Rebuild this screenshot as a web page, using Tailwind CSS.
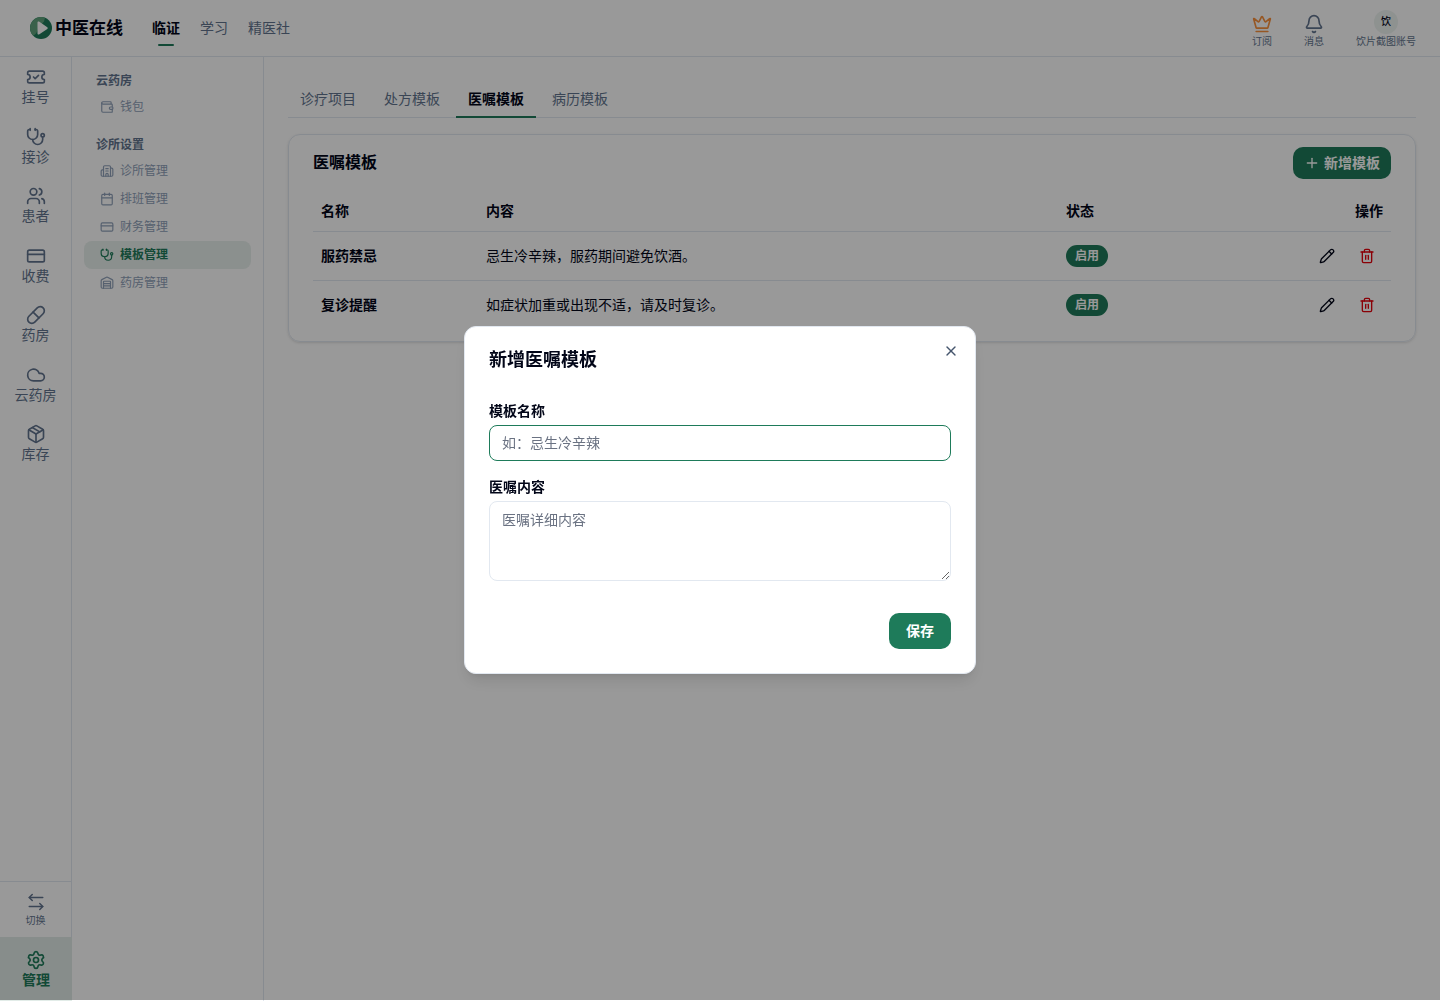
<!DOCTYPE html>
<html lang="zh-CN">
<head>
  <meta charset="UTF-8" />
  <meta name="viewport" content="width=device-width, initial-scale=1.0" />
  <title>中医在线 - 模板管理</title>
  <script src="https://cdn.jsdelivr.net/npm/@tailwindcss/browser@4"></script>
</head>
<body class="bg-white text-slate-950 text-sm font-['Liberation_Sans','Noto_Sans_CJK_SC',sans-serif]">

  <!-- 图标 -->
  <svg class="hidden">
    <symbol id="i-ticket" viewBox="0 0 24 24"><path d="M2 9a3 3 0 1 1 0 6v2a2 2 0 0 0 2 2h16a2 2 0 0 0 2-2v-2a3 3 0 1 1 0-6V7a2 2 0 0 0-2-2H4a2 2 0 0 0-2 2Z"/><path d="m9 12 2 2 4-4"/></symbol>
    <symbol id="i-stethoscope" viewBox="0 0 24 24"><path d="M11 2v2"/><path d="M5 2v2"/><path d="M5 3H4a2 2 0 0 0-2 2v4a6 6 0 0 0 12 0V5a2 2 0 0 0-2-2h-1"/><path d="M8 15a6 6 0 0 0 12 0v-3"/><circle cx="20" cy="10" r="2"/></symbol>
    <symbol id="i-users" viewBox="0 0 24 24"><path d="M16 21v-2a4 4 0 0 0-4-4H6a4 4 0 0 0-4 4v2"/><circle cx="9" cy="7" r="4"/><path d="M22 21v-2a4 4 0 0 0-3-3.87"/><path d="M16 3.13a4 4 0 0 1 0 7.75"/></symbol>
    <symbol id="i-card" viewBox="0 0 24 24"><rect width="20" height="14" x="2" y="5" rx="2"/><path d="M2 10h20"/></symbol>
    <symbol id="i-pill" viewBox="0 0 24 24"><path d="m10.5 20.5 10-10a4.95 4.95 0 1 0-7-7l-10 10a4.95 4.95 0 1 0 7 7Z"/><path d="m8.5 8.5 7 7"/></symbol>
    <symbol id="i-cloud" viewBox="0 0 24 24"><path d="M17.5 19H9a7 7 0 1 1 6.71-9h1.79a4.5 4.5 0 1 1 0 9Z"/></symbol>
    <symbol id="i-package" viewBox="0 0 24 24"><path d="M11 21.73a2 2 0 0 0 2 0l7-4A2 2 0 0 0 21 16V8a2 2 0 0 0-1-1.73l-7-4a2 2 0 0 0-2 0l-7 4A2 2 0 0 0 3 8v8a2 2 0 0 0 1 1.73z"/><path d="M12 22V12"/><path d="m3.3 7 8.7 5 8.7-5"/><path d="m7.5 4.27 9 5.15"/></symbol>
    <symbol id="i-switch" viewBox="0 0 24 24"><path d="M7 2 3 6l4 4"/><path d="M3 6h18"/><path d="m17 14 4 4-4 4"/><path d="M21 18H3"/></symbol>
    <symbol id="i-settings" viewBox="0 0 24 24"><path d="M9.671 4.136a2.34 2.34 0 0 1 4.659 0 2.34 2.34 0 0 0 3.319 1.915 2.34 2.34 0 0 1 2.33 4.033 2.34 2.34 0 0 0 0 3.831 2.34 2.34 0 0 1-2.33 4.033 2.34 2.34 0 0 0-3.319 1.915 2.34 2.34 0 0 1-4.659 0 2.34 2.34 0 0 0-3.32-1.915 2.34 2.34 0 0 1-2.33-4.033 2.34 2.34 0 0 0 0-3.831A2.34 2.34 0 0 1 6.35 6.051a2.34 2.34 0 0 0 3.319-1.915"/><circle cx="12" cy="12" r="3"/></symbol>
    <symbol id="i-wallet" viewBox="0 0 24 24"><path d="M19 7V4a1 1 0 0 0-1-1H5a2 2 0 0 0 0 4h15a1 1 0 0 1 1 1v4h-3a2 2 0 0 0 0 4h3a1 1 0 0 0 1-1v-2a1 1 0 0 0-1-1"/><path d="M3 5v14a2 2 0 0 0 2 2h15a1 1 0 0 0 1-1v-4"/></symbol>
    <symbol id="i-building" viewBox="0 0 24 24"><path d="M10 12h4"/><path d="M10 8h4"/><path d="M14 21v-3a2 2 0 0 0-4 0v3"/><path d="M6 10H4a2 2 0 0 0-2 2v7a2 2 0 0 0 2 2h16a2 2 0 0 0 2-2V9a2 2 0 0 0-2-2h-2"/><path d="M6 21V5a2 2 0 0 1 2-2h8a2 2 0 0 1 2 2v16"/></symbol>
    <symbol id="i-calendar" viewBox="0 0 24 24"><path d="M8 2v4"/><path d="M16 2v4"/><rect width="18" height="18" x="3" y="4" rx="2"/><path d="M3 10h18"/></symbol>
    <symbol id="i-warehouse" viewBox="0 0 24 24"><path d="M18 21V10a1 1 0 0 0-1-1H7a1 1 0 0 0-1 1v11"/><path d="M22 19a2 2 0 0 1-2 2H4a2 2 0 0 1-2-2V8a2 2 0 0 1 1.132-1.803l7.95-3.974a2 2 0 0 1 1.837 0l7.948 3.974A2 2 0 0 1 22 8z"/><path d="M6 13h12"/><path d="M6 17h12"/></symbol>
    <symbol id="i-crown" viewBox="0 0 24 24"><path d="M11.562 3.266a.5.5 0 0 1 .876 0L15.39 8.87a1 1 0 0 0 1.516.294L21.183 5.5a.5.5 0 0 1 .798.519l-2.834 10.246a1 1 0 0 1-.956.734H5.81a1 1 0 0 1-.957-.734L2.02 6.02a.5.5 0 0 1 .798-.519l4.276 3.664a1 1 0 0 0 1.516-.294z"/><path d="M5 21h14"/></symbol>
    <symbol id="i-bell" viewBox="0 0 24 24"><path d="M10.268 21a2 2 0 0 0 3.464 0"/><path d="M3.262 15.326A1 1 0 0 0 4 17h16a1 1 0 0 0 .74-1.673C19.41 13.956 18 12.499 18 8A6 6 0 0 0 6 8c0 4.499-1.411 5.956-2.738 7.326"/></symbol>
    <symbol id="i-plus" viewBox="0 0 24 24"><path d="M5 12h14"/><path d="M12 5v14"/></symbol>
    <symbol id="i-pencil" viewBox="0 0 24 24"><path d="M21.174 6.812a1 1 0 0 0-3.986-3.987L3.842 16.174a2 2 0 0 0-.5.83l-1.321 4.352a.5.5 0 0 0 .623.622l4.353-1.32a2 2 0 0 0 .83-.497z"/><path d="m15 5 4 4"/></symbol>
    <symbol id="i-trash" viewBox="0 0 24 24"><path d="M3 6h18"/><path d="M19 6v14a2 2 0 0 1-2 2H7a2 2 0 0 1-2-2V6"/><path d="M8 6V4a2 2 0 0 1 2-2h4a2 2 0 0 1 2 2v2"/><path d="M10 11v6"/><path d="M14 11v6"/></symbol>
    <symbol id="i-x" viewBox="0 0 24 24"><path d="M18 6 6 18"/><path d="m6 6 12 12"/></symbol>
  </svg>

  <div class="min-h-screen flex flex-col">
    <!-- 顶部导航 -->
    <header class="h-[57px] shrink-0 border-b border-slate-200 flex items-center justify-between pl-[30px] pr-6">
      <div class="flex items-center gap-[29px]">
        <a href="#" class="flex items-center gap-[3px]">
          <svg class="size-[22px]" viewBox="0 0 22 22">
            <circle cx="11" cy="11" r="11" fill="#1e7b5a"/>
            <path d="M15 .75A11 11 0 0 0 3.200 18.750C6.500 17 8 14 8 11L14 4.500z" fill="#5fa27c"/>
            <path d="M7.500 5.400v11.200c0 .8.8 1.200 1.500.8l8.300-5.500c.6-.4.6-1.300 0-1.700L9 4.600c-.7-.4-1.500 0-1.500.8z" fill="#fff"/>
          </svg>
          <span class="pt-px text-[17px] leading-6 font-bold">中医在线</span>
        </a>
        <nav class="flex gap-5 leading-5 text-slate-500">
          <a href="#" class="relative font-bold text-slate-950">临证<span class="absolute left-1/2 -translate-x-1/2 -bottom-2 w-4 h-0.5 rounded-full bg-[#1e7b5a]"></span></a>
          <a href="#">学习</a>
          <a href="#">精医社</a>
        </nav>
      </div>
      <div class="flex items-end gap-8 pt-0.5 text-[10px] leading-3 text-slate-500">
        <button class="flex flex-col items-center gap-0.5">
          <svg class="size-5 fill-none stroke-[#fb923c] stroke-2" stroke-linecap="round" stroke-linejoin="round"><use href="#i-crown"/></svg>
          订阅
        </button>
        <button class="flex flex-col items-center gap-0.5">
          <svg class="size-5 fill-none stroke-current stroke-2" stroke-linecap="round" stroke-linejoin="round"><use href="#i-bell"/></svg>
          消息
        </button>
        <button class="flex flex-col items-center gap-0.5">
          <span class="size-6 rounded-full bg-[#edf3f1] text-slate-950 font-medium flex items-center justify-center">饮</span>
          饮片截图账号
        </button>
      </div>
    </header>

    <div class="flex flex-1">
      <!-- 主侧栏 -->
      <aside class="w-[72px] shrink-0 border-r border-slate-200 flex flex-col justify-between text-slate-500">
        <nav class="flex flex-col gap-1 pt-0.5 leading-tight">
          <a href="#" class="flex flex-col items-center gap-0.5 py-2"><svg class="size-5 fill-none stroke-current stroke-2" stroke-linecap="round" stroke-linejoin="round"><use href="#i-ticket"/></svg>挂号</a>
          <a href="#" class="flex flex-col items-center gap-0.5 py-2"><svg class="size-5 fill-none stroke-current stroke-2" stroke-linecap="round" stroke-linejoin="round"><use href="#i-stethoscope"/></svg>接诊</a>
          <a href="#" class="flex flex-col items-center gap-0.5 py-2"><svg class="size-5 fill-none stroke-current stroke-2" stroke-linecap="round" stroke-linejoin="round"><use href="#i-users"/></svg>患者</a>
          <a href="#" class="flex flex-col items-center gap-0.5 py-2"><svg class="size-5 fill-none stroke-current stroke-2" stroke-linecap="round" stroke-linejoin="round"><use href="#i-card"/></svg>收费</a>
          <a href="#" class="flex flex-col items-center gap-0.5 py-2"><svg class="size-5 fill-none stroke-current stroke-2" stroke-linecap="round" stroke-linejoin="round"><use href="#i-pill"/></svg>药房</a>
          <a href="#" class="flex flex-col items-center gap-0.5 py-2"><svg class="size-5 fill-none stroke-current stroke-2" stroke-linecap="round" stroke-linejoin="round"><use href="#i-cloud"/></svg>云药房</a>
          <a href="#" class="flex flex-col items-center gap-0.5 py-2"><svg class="size-5 fill-none stroke-current stroke-2" stroke-linecap="round" stroke-linejoin="round"><use href="#i-package"/></svg>库存</a>
        </nav>
        <div class="border-t border-slate-200">
          <button class="w-full h-[55px] flex flex-col items-center justify-center gap-1 text-[10px] leading-3">
            <svg class="size-[18px] fill-none stroke-current stroke-2" stroke-linecap="round" stroke-linejoin="round"><use href="#i-switch"/></svg>
            切换
          </button>
          <a href="#" class="-mr-px h-16 pb-3 flex flex-col items-center justify-end gap-0.5 leading-tight font-semibold bg-[#e2ece8] text-[#1e7b5a]">
            <svg class="size-5 fill-none stroke-current stroke-2" stroke-linecap="round" stroke-linejoin="round"><use href="#i-settings"/></svg>
            管理
          </a>
        </div>
      </aside>

      <!-- 二级菜单 -->
      <aside class="w-48 shrink-0 border-r border-slate-200 px-3 py-4 space-y-4 text-xs text-slate-400">
        <section class="space-y-1">
          <h2 class="px-3 font-semibold text-slate-500">云药房</h2>
          <a href="#" class="flex items-center gap-1.5 h-7 px-4 rounded-lg"><svg class="size-3.5 fill-none stroke-current stroke-2" stroke-linecap="round" stroke-linejoin="round"><use href="#i-wallet"/></svg>钱包</a>
        </section>
        <section class="space-y-1">
          <h2 class="px-3 font-semibold text-slate-500">诊所设置</h2>
          <div>
            <a href="#" class="flex items-center gap-1.5 h-7 px-4 rounded-lg"><svg class="size-3.5 fill-none stroke-current stroke-2" stroke-linecap="round" stroke-linejoin="round"><use href="#i-building"/></svg>诊所管理</a>
            <a href="#" class="flex items-center gap-1.5 h-7 px-4 rounded-lg"><svg class="size-3.5 fill-none stroke-current stroke-2" stroke-linecap="round" stroke-linejoin="round"><use href="#i-calendar"/></svg>排班管理</a>
            <a href="#" class="flex items-center gap-1.5 h-7 px-4 rounded-lg"><svg class="size-3.5 fill-none stroke-current stroke-2" stroke-linecap="round" stroke-linejoin="round"><use href="#i-card"/></svg>财务管理</a>
            <a href="#" class="flex items-center gap-1.5 h-7 px-4 rounded-lg bg-[#e8f0ed] text-[#1e7b5a] font-semibold"><svg class="size-3.5 fill-none stroke-current stroke-2" stroke-linecap="round" stroke-linejoin="round"><use href="#i-stethoscope"/></svg>模板管理</a>
            <a href="#" class="flex items-center gap-1.5 h-7 px-4 rounded-lg"><svg class="size-3.5 fill-none stroke-current stroke-2" stroke-linecap="round" stroke-linejoin="round"><use href="#i-warehouse"/></svg>药房管理</a>
          </div>
        </section>
      </aside>

      <!-- 内容区 -->
      <main class="flex-1 min-w-0 p-6">
        <div role="tablist" class="flex gap-1 border-b border-slate-200 text-slate-500">
          <button role="tab" class="h-[37px] -mb-px px-3 border-b-2 border-transparent">诊疗项目</button>
          <button role="tab" class="h-[37px] -mb-px px-3 border-b-2 border-transparent">处方模板</button>
          <button role="tab" aria-selected="true" class="h-[37px] -mb-px px-3 border-b-2 border-[#1e7b5a] font-semibold text-slate-950">医嘱模板</button>
          <button role="tab" class="h-[37px] -mb-px px-3 border-b-2 border-transparent">病历模板</button>
        </div>

        <section class="mt-4 px-6 py-3 border border-slate-200 rounded-xl shadow-sm">
          <div class="flex items-center justify-between">
            <h1 class="text-base font-semibold">医嘱模板</h1>
            <button class="h-8 px-[11px] rounded-[10px] bg-[#1e7b5a] text-white font-semibold flex items-center gap-1">
              <svg class="size-4 fill-none stroke-current stroke-2" stroke-linecap="round" stroke-linejoin="round"><use href="#i-plus"/></svg>
              新增模板
            </button>
          </div>
          <table class="mt-3 w-full table-fixed text-left">
            <thead>
              <tr class="h-10 border-b border-slate-200">
                <th class="w-[165px] px-2 font-semibold">名称</th>
                <th class="px-2 font-semibold">内容</th>
                <th class="w-[150px] px-2 font-semibold">状态</th>
                <th class="w-[183px] px-2 font-semibold text-right">操作</th>
              </tr>
            </thead>
            <tbody>
              <tr class="border-b border-slate-200">
                <td class="p-2 font-semibold">服药禁忌</td>
                <td class="p-2">忌生冷辛辣，服药期间避免饮酒。</td>
                <td class="p-2"><span class="inline-flex px-2 py-0.5 border border-transparent rounded-full bg-[#1e7b5a] text-white text-xs font-semibold align-middle">启用</span></td>
                <td class="p-2">
                  <div class="flex justify-end gap-2">
                    <button aria-label="编辑" class="size-8 flex items-center justify-center"><svg class="size-4 fill-none stroke-current stroke-2" stroke-linecap="round" stroke-linejoin="round"><use href="#i-pencil"/></svg></button>
                    <button aria-label="删除" class="size-8 flex items-center justify-center text-red-600"><svg class="size-4 fill-none stroke-current stroke-2" stroke-linecap="round" stroke-linejoin="round"><use href="#i-trash"/></svg></button>
                  </div>
                </td>
              </tr>
              <tr>
                <td class="p-2 font-semibold">复诊提醒</td>
                <td class="p-2">如症状加重或出现不适，请及时复诊。</td>
                <td class="p-2"><span class="inline-flex px-2 py-0.5 border border-transparent rounded-full bg-[#1e7b5a] text-white text-xs font-semibold align-middle">启用</span></td>
                <td class="p-2">
                  <div class="flex justify-end gap-2">
                    <button aria-label="编辑" class="size-8 flex items-center justify-center"><svg class="size-4 fill-none stroke-current stroke-2" stroke-linecap="round" stroke-linejoin="round"><use href="#i-pencil"/></svg></button>
                    <button aria-label="删除" class="size-8 flex items-center justify-center text-red-600"><svg class="size-4 fill-none stroke-current stroke-2" stroke-linecap="round" stroke-linejoin="round"><use href="#i-trash"/></svg></button>
                  </div>
                </td>
              </tr>
            </tbody>
          </table>
        </section>
      </main>
    </div>
  </div>

  <!-- 新增模板弹窗 -->
  <div class="fixed inset-x-0 top-0 bottom-px bg-black/40 flex items-center justify-center">
    <form role="dialog" aria-labelledby="dlg-title" onsubmit="return false" class="relative w-full max-w-lg p-6 bg-white border border-slate-200 rounded-xl shadow-lg">
      <button type="button" aria-label="关闭" class="absolute top-4 right-4 text-slate-600">
        <svg class="size-4 fill-none stroke-current stroke-2" stroke-linecap="round" stroke-linejoin="round"><use href="#i-x"/></svg>
      </button>
      <h2 id="dlg-title" class="text-lg leading-none font-semibold">新增医嘱模板</h2>
      <div class="py-4 my-4 space-y-4">
        <div>
          <label for="tpl-name" class="block font-semibold">模板名称</label>
          <input id="tpl-name" type="text" placeholder="如：忌生冷辛辣" class="block mt-1 w-full h-9 px-3 border border-[#1e7b5a] rounded-lg outline-none placeholder:text-gray-500" />
        </div>
        <div>
          <label for="tpl-content" class="block font-semibold">医嘱内容</label>
          <textarea id="tpl-content" placeholder="医嘱详细内容" class="block mt-1 w-full h-20 px-3 py-2 border border-slate-200 rounded-lg outline-none placeholder:text-gray-500"></textarea>
        </div>
      </div>
      <div class="flex justify-end">
        <button type="submit" class="h-9 px-[17px] rounded-[10px] bg-[#1e7b5a] text-white font-semibold">保存</button>
      </div>
    </form>
  </div>

</body>
</html>
